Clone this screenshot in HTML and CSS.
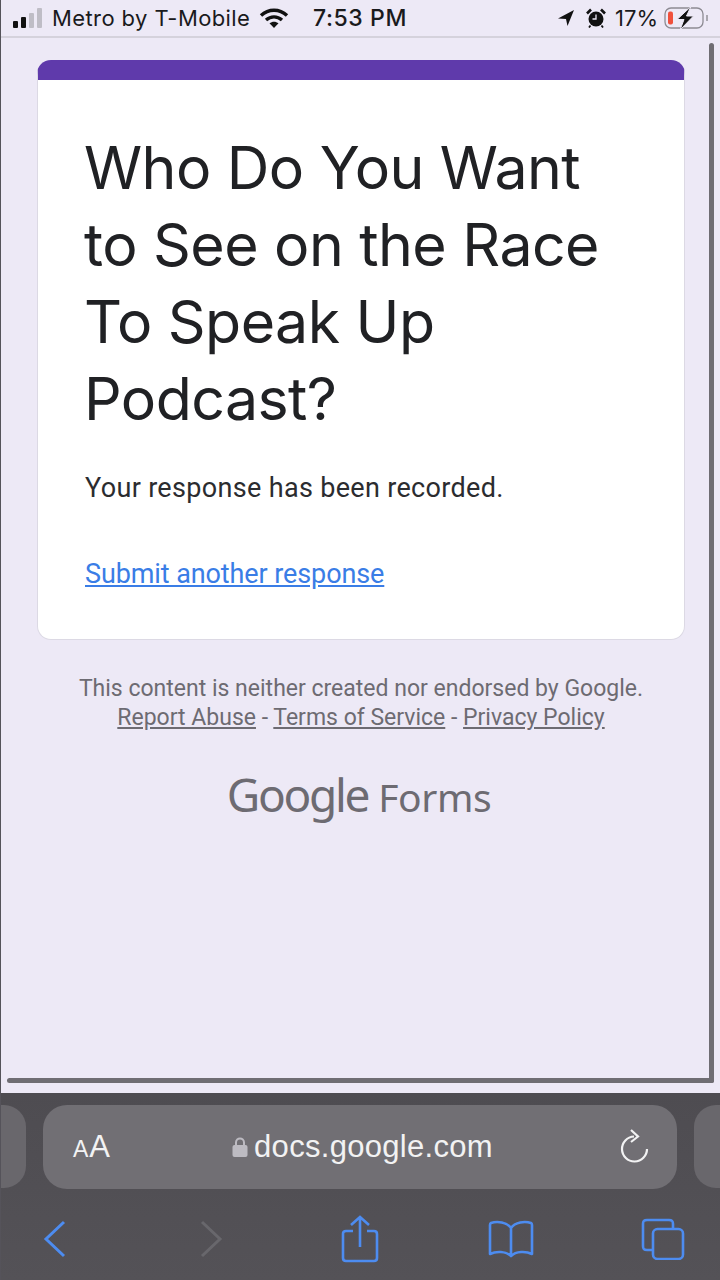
FILE: index.html
```html
<!DOCTYPE html>
<html lang="en">
<head>
    <meta charset="UTF-8">
    <meta name="viewport" content="width=device-width, initial-scale=1.0">
    <title>Google Forms</title>
    <link rel="stylesheet" href="styles.css">
</head>
<body>
    <div class="screen">
        <div class="status-bar">
            <div class="status-left">
                <div class="signal">
                    <span class="bar bar-1"></span>
                    <span class="bar bar-2"></span>
                    <span class="bar bar-3"></span>
                    <span class="bar bar-4"></span>
                </div>
                <span class="carrier">Metro by T-Mobile</span>
                <svg class="wifi" width="30" height="22" viewBox="0 0 30 22">
                    <path d="M2 8.500C9.500 1.500 20.500 1.500 28 8.500" fill="none" stroke="#111" stroke-width="3.400"/>
                    <path d="M7 13C11.800 8.800 18.200 8.800 23 13" fill="none" stroke="#111" stroke-width="3.400"/>
                    <path d="M10.500 16.300C13.200 14.200 16.800 14.200 19.500 16.300L15 21Z" fill="#111"/>
                </svg>
            </div>
            <span class="clock">7:53 PM</span>
            <div class="status-right">
                <svg width="18" height="18" viewBox="0 0 18 18">
                    <path d="M17 1L1 9.500L9 10L10.500 17Z" fill="#111"/>
                </svg>
                <svg class="alarm" width="20" height="20" viewBox="0 0 20 20">
                    <circle cx="10" cy="11" r="7.500" fill="#111"/>
                    <path d="M10 6.500V11H6.500" fill="none" stroke="#ede9f6" stroke-width="1.300"/>
                    <path d="M1 5.500L5 1.500M19 5.500L15 1.500" stroke="#111" stroke-width="2.600"/>
                    <path d="M4.500 17.500L3 19.500M15.500 17.500L17 19.500" stroke="#111" stroke-width="1.800"/>
                </svg>
                <span class="battery-text">17%</span>
                <svg class="battery" width="46" height="24" viewBox="0 0 46 24">
                    <rect x="1" y="2" width="38" height="20" rx="6" fill="none" stroke="#8d8b93" stroke-width="1.300"/>
                    <rect x="4" y="5.500" width="5" height="13" rx="2" fill="#f0503c"/>
                    <path d="M43 9V15" stroke="#a9a7af" stroke-width="2"/>
                    <path d="M27 0.500L13 13.500H20L16 24L29.500 10H22.500Z" fill="#111" stroke="#ede9f6" stroke-width="1"/>
                </svg>
            </div>
        </div>

        <div class="page">
            <div class="card">
                <h1>Who Do You Want to See on the Race To Speak Up Podcast?</h1>
                <p class="recorded">Your response has been recorded.</p>
                <a class="another" href="#">Submit another response</a>
            </div>
            <div class="disclaimer">
                <p>This content is neither created nor endorsed by Google.</p>
                <p><a href="#">Report Abuse</a> - <a href="#">Terms of Service</a> - <a href="#">Privacy Policy</a></p>
            </div>
            <div class="logo"><span class="logo-google">Google</span><span class="logo-forms">Forms</span></div>
            <div class="scroll-v"></div>
            <div class="scroll-h"></div>
        </div>

        <div class="toolbar">
            <div class="tabs">
                <div class="side-pill"></div>
                <div class="url-pill">
                    <span class="aa"><small>A</small>A</span>
                    <div class="address">
                        <svg width="16" height="24" viewBox="0 0 16 24">
                            <path d="M4 11V7.500C4 2 12 2 12 7.500V11" fill="none" stroke="#bdbbc2" stroke-width="2"/>
                            <rect x="0.500" y="10" width="15" height="12" rx="2" fill="#bdbbc2"/>
                        </svg>
                        <span>docs.google.com</span>
                    </div>
                    <svg class="reload" width="32" height="36" viewBox="0 0 32 36">
                        <path d="M15 7.500A12.500 12.500 0 1 0 28 20" fill="none" stroke="#f2f2f3" stroke-width="2.200"/>
                        <path d="M12 1L19 7.500L12 13" fill="none" stroke="#f2f2f3" stroke-width="2.200"/>
                    </svg>
                </div>
                <div class="side-pill"></div>
            </div>
            <div class="nav">
                <svg width="24" height="38" viewBox="0 0 24 38">
                    <path d="M21 2L3 19L21 36" fill="none" stroke="#4d8cf0" stroke-width="3"/>
                </svg>
                <svg width="24" height="38" viewBox="0 0 24 38">
                    <path d="M3 2L21 19L3 36" fill="none" stroke="#68676c" stroke-width="3"/>
                </svg>
                <svg width="38" height="48" viewBox="0 0 38 48">
                    <path d="M12 16H5C3 16 2 17 2 19V43C2 45 3 46 5 46H33C35 46 36 45 36 43V19C36 17 35 16 33 16H26" fill="none" stroke="#4d8cf0" stroke-width="2.600"/>
                    <path d="M19 32V2M10 10L19 2L28 10" fill="none" stroke="#4d8cf0" stroke-width="2.600"/>
                </svg>
                <svg width="46" height="38" viewBox="0 0 46 38">
                    <path d="M23 8C19 2 9 1 3 3C2 3.500 2 4 2 5V34C8 31 18 31 23 36C28 31 38 31 44 34V5C44 4 44 3.500 43 3C37 1 27 2 23 8V36" fill="none" stroke="#4d8cf0" stroke-width="2.600" stroke-linejoin="round"/>
                </svg>
                <svg width="44" height="42" viewBox="0 0 44 42">
                    <path d="M11 32H6C3 32 2 31 2 28V6C2 3 3 2 6 2H28C31 2 32 3 32 6V11" fill="none" stroke="#4d8cf0" stroke-width="2.600"/>
                    <rect x="12" y="11" width="30" height="30" rx="4.500" fill="none" stroke="#4d8cf0" stroke-width="2.600"/>
                </svg>
            </div>
        </div>
    </div>
</body>
</html>
```

FILE: styles.css
```css
* {
    box-sizing: border-box;
}

body {
    margin: 0;
    font-family: Roboto, "Liberation Sans", sans-serif;
    background-color: #ede9f6;
}

p {
    margin: 0;
}

.screen {
    width: 720px;
    height: 1280px;
    display: flex;
    flex-direction: column;
    overflow: hidden;
    border-left: 1px solid #55535a;
}

.status-bar {
    height: 38px;
    padding: 0 10px 0 12px;
    display: flex;
    align-items: center;
    color: #1a1a1c;
    font-family: Inter, "Liberation Sans", sans-serif;
    font-size: 22px;
    border-bottom: 2px solid #d5d2dc;
}

.status-left,
.status-right {
    display: flex;
    align-items: center;
}

.status-left {
    width: 300px;
}

.status-right {
    margin-left: auto;
}

.signal {
    display: flex;
    align-items: flex-end;
    gap: 3px;
    margin-right: 10px;
}

.bar {
    width: 5px;
    background-color: #111;
    border-radius: 1px;
}

.bar-1 { height: 7px; }
.bar-2 { height: 11px; }
.bar-3 { height: 15px; background-color: #bfbdc6; }
.bar-4 { height: 20px; background-color: #bfbdc6; }

.carrier {
    white-space: nowrap;
    letter-spacing: 0.4px;
}

.wifi {
    margin-left: 9px;
    flex-shrink: 0;
}

.clock {
    font-size: 23px;
    font-weight: 500;
    letter-spacing: 0.6px;
}

.alarm {
    margin-left: 11px;
}

.battery-text {
    margin-left: 9px;
}

.battery {
    margin-left: 6px;
}

.page {
    position: relative;
    height: 1055px;
    padding: 22px 35px 0 36px;
    display: flex;
    flex-direction: column;
    align-items: center;
}

.card {
    width: 648px;
    height: 580px;
    padding: 49px 46px 0 47px;
    background-color: #fff;
    border: 1px solid #dcd9e4;
    border-top: 20px solid #5f3aab;
    border-radius: 14px;
}

h1 {
    margin: 0 0 33px -1px;
    font-family: Inter, "Open Sans", sans-serif;
    font-size: 59px;
    font-weight: 400;
    line-height: 77px;
    letter-spacing: -0.55px;
    color: #202124;
}

.recorded {
    font-size: 27px;
    line-height: 36px;
    letter-spacing: 0.33px;
    color: #2b2c2f;
}

.another {
    display: inline-block;
    margin-top: 50px;
    font-size: 27px;
    line-height: 36px;
    letter-spacing: -0.1px;
    color: #3a7de6;
}

.disclaimer {
    margin-top: 34px;
    text-align: center;
    font-size: 23px;
    line-height: 29px;
    color: #6d6b72;
}

.disclaimer a {
    color: #6d6b72;
}

.logo {
    margin-top: 31px;
    margin-right: 4px;
    display: flex;
    align-items: baseline;
    gap: 10px;
    color: #6d6b72;
    white-space: nowrap;
    font-family: "Noto Sans", sans-serif;
}

.logo-google {
    font-size: 46px;
    letter-spacing: -2.300px;
}

.logo-forms {
    font-size: 39px;
    letter-spacing: -0.4px;
}

.scroll-v {
    position: absolute;
    right: 6px;
    top: 5px;
    width: 5px;
    height: 1040px;
    background-color: #6f6d73;
    border-radius: 3px;
}

.scroll-h {
    position: absolute;
    left: 6px;
    right: 6px;
    top: 1040px;
    height: 5px;
    background-color: #6f6d73;
    border-radius: 3px;
}

.toolbar {
    flex: 1;
    background: linear-gradient(#4e4c51, #545257);
    margin-left: -1px;
    padding-top: 12px;
}

.tabs {
    display: flex;
    gap: 17px;
    margin-left: -99px;
    width: 920px;
}

.side-pill {
    width: 125px;
    height: 83px;
    border-radius: 22px;
    background-color: #69676c;
}

.url-pill {
    width: 634px;
    height: 84px;
    padding: 0 26px 0 30px;
    border-radius: 24px;
    background-color: #716f74;
    display: flex;
    align-items: center;
    justify-content: space-between;
    color: #f2f2f3;
}

.aa {
    font-family: "Liberation Sans", Arial, sans-serif;
    font-size: 31px;
}

.aa small {
    font-size: 23px;
    margin-right: 1px;
}

.address {
    display: flex;
    align-items: center;
    gap: 6px;
    margin-right: 4px;
    font-size: 31px;
    letter-spacing: 0.3px;
    font-family: "Liberation Sans", Arial, sans-serif;
}

.nav {
    display: grid;
    grid-template-columns: 152px 160px 138px 164px 140px;
    justify-items: center;
    align-items: center;
    height: 60px;
    margin-top: 20px;
    margin-left: -21px;
}
```
